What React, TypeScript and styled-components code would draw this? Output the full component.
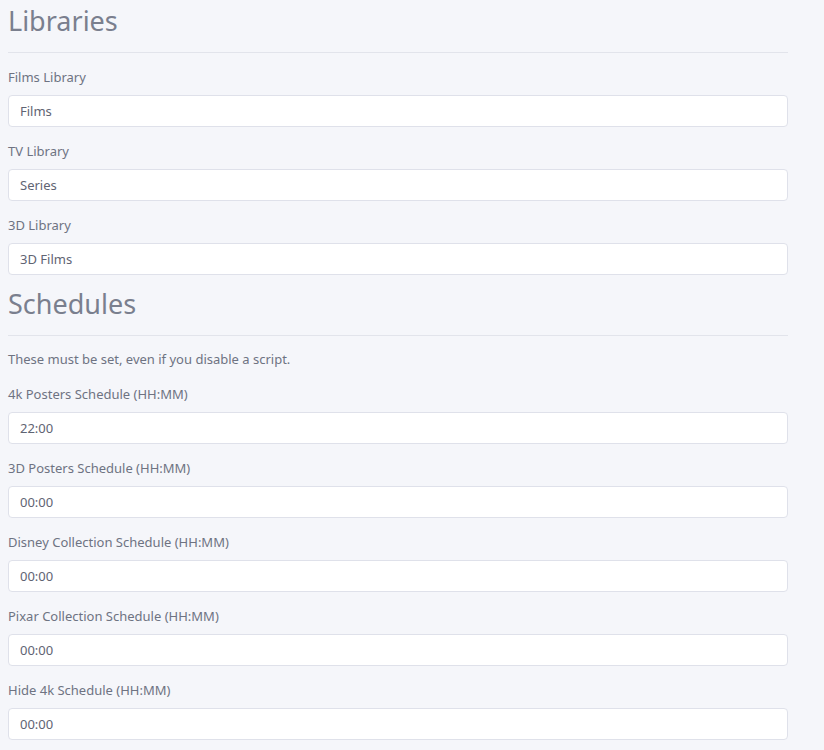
import React from "react";
import styled, { createGlobalStyle } from "styled-components";

const Global = createGlobalStyle`
  html, body { margin: 0; padding: 0; background: #f5f6fa; }
  body { font-family: "Noto Sans", "Open Sans", sans-serif; color: #6e7382; }
  * { box-sizing: border-box; }
`;

const Page = styled.div`
  width: 780px;
  margin-left: 8px;
  padding-top: 5px;
  display: flex;
  flex-direction: column;
`;

const Heading = styled.h2<{ $tight?: boolean }>`
  margin: ${(p) => (p.$tight ? "-2px 0 0" : "0")};
  font-weight: 400;
  font-size: 27px;
  line-height: 32px;
  color: #7a7f8e;
`;

const Rule = styled.hr`
  margin: 15px 0 15px;
  border: 0;
  border-top: 1px solid #e2e4eb;
`;

const Note = styled.p`
  margin: -1px 0 17px;
  font-size: 13px;
  line-height: 18px;
`;

const Field = styled.div`
  display: flex;
  flex-direction: column;
  gap: 9px;
  margin-bottom: 15px;
`;

const Label = styled.label`
  font-size: 13px;
  line-height: 18px;
  color: #6e7382;
`;

const Input = styled.input`
  height: 32px;
  width: 100%;
  padding: 0 11px;
  border: 1px solid #dfe1ea;
  border-radius: 4px;
  background: #fff;
  font-family: inherit;
  font-size: 13px;
  color: #5f6473;
  outline: none;
`;

const Row = ({ label, value }: { label: string; value: string }) => (
  <Field>
    <Label>{label}</Label>
    <Input defaultValue={value} />
  </Field>
);

export default function App() {
  return (
    <>
      <Global />
      <Page>
        <Heading>Libraries</Heading>
        <Rule />
        <Row label="Films Library" value="Films" />
        <Row label="TV Library" value="Series" />
        <Row label="3D Library" value="3D Films" />
        <Heading $tight>Schedules</Heading>
        <Rule />
        <Note>These must be set, even if you disable a script.</Note>
        <Row label="4k Posters Schedule (HH:MM)" value="22:00" />
        <Row label="3D Posters Schedule (HH:MM)" value="00:00" />
        <Row label="Disney Collection Schedule (HH:MM)" value="00:00" />
        <Row label="Pixar Collection Schedule (HH:MM)" value="00:00" />
        <Row label="Hide 4k Schedule (HH:MM)" value="00:00" />
      </Page>
    </>
  );
}
